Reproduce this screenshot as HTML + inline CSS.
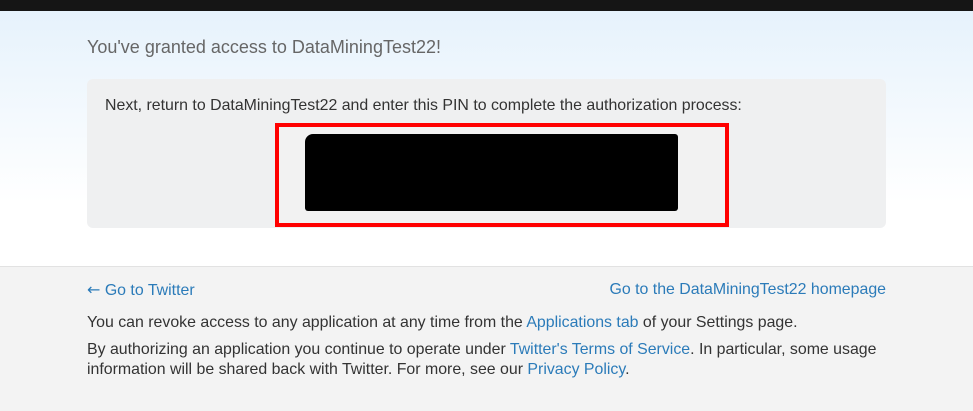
<!DOCTYPE html>
<html><head><style>
body{margin:0;width:973px;height:410px;overflow:hidden;font-family:"Liberation Sans",Arial,sans-serif;position:relative;background:#f3f3f3}
.top{position:absolute;left:0;top:0;width:973px;height:11px;background:#151515;box-shadow:0 1px 2px #888}
.hero{position:absolute;left:0;top:11px;width:973px;height:255px;background:linear-gradient(#e6f2fc,#ffffff 75%)}
h1{position:absolute;left:87px;top:37px;margin:0;font-weight:normal;font-size:18px;color:#666}
.panel{position:absolute;left:87px;top:79px;width:799px;height:149px;background:#eff0f1;border-radius:6px}
.p1{position:absolute;left:105px;top:97px;font-size:15.9px;color:#333}
.red{position:absolute;left:275px;top:123px;width:446px;height:96px;border:4px solid #f00;background:#f2f2f2}
.blk{position:absolute;left:305px;top:134px;width:373px;height:77px;background:#000;border-radius:8px 3px 3px 3px}
.foot{position:absolute;left:0;top:266px;width:973px;height:144px;border-top:1px solid #e2e2e2;background:#f3f3f3}
.t{position:absolute;font-size:15.9px;color:#333;line-height:20px}
a{color:#2b7bb9;text-decoration:none}
</style></head><body>
<div class="top"></div>
<div class="hero"></div>
<h1>You've granted access to DataMiningTest22!</h1>
<div class="panel"></div>
<div class="p1">Next, return to DataMiningTest22 and enter this PIN to complete the authorization process:</div>
<div class="red"></div>
<div class="blk"></div>
<div class="foot"></div>
<div class="t" style="left:87px;top:280px"><a><span style="font-family:'DejaVu Sans';font-size:16px">←</span> Go to Twitter</a></div>
<div class="t" style="right:87px;top:280px"><a>Go to the DataMiningTest22 homepage</a></div>
<div class="t" style="left:87px;top:313px">You can revoke access to any application at any time from the <a>Applications tab</a> of your Settings page.</div>
<div class="t" style="left:87px;top:340px;width:810px">By authorizing an application you continue to operate under <a>Twitter's Terms of Service</a>. In particular, some usage information will be shared back with Twitter. For more, see our <a>Privacy Policy</a>.</div>
</body></html>
